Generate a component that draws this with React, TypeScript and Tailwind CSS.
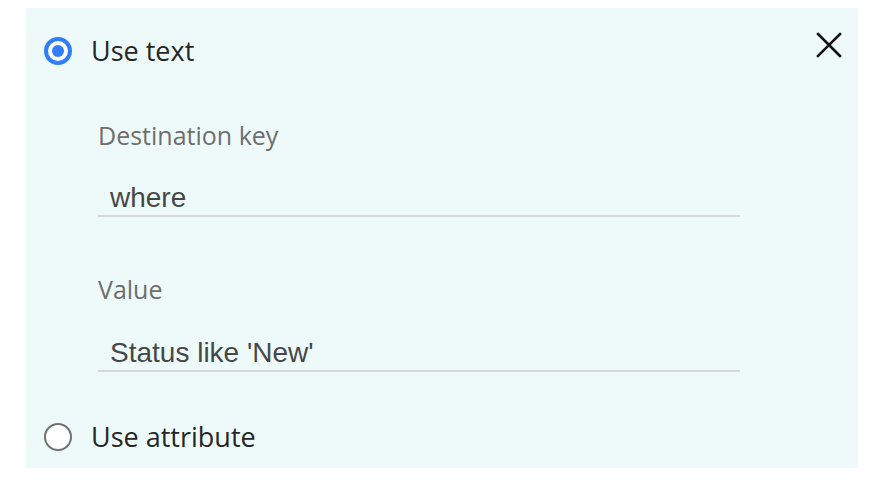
import { useState } from 'react';

type tField = {
    label: string;
    value: string;
}

const fields: tField[] = [
    { label: 'Destination key', value: 'where' },
    { label: 'Value', value: "Status like 'New'" },
];

const Radio = ({ checked }: { checked: boolean }) => {
    if (checked) {
        return <span className="flex items-center justify-center w-[28px] h-[28px] rounded-full border-[4px] border-[#2f7df7] bg-white shrink-0">
            <span className="w-[12px] h-[12px] rounded-full bg-[#2f7df7]" />
        </span>
    }
    return <span className="w-[28px] h-[28px] rounded-full border-[2.5px] border-[#717171] bg-white shrink-0" />
}

const App = () => {
    const [mode, setMode] = useState<'text' | 'attribute'>('text');

    return <div className="bg-white w-[880px] h-[484px] pt-[8px] pl-[26px]" style={{ fontFamily: '"Open Sans", "Noto Sans", sans-serif' }}>
        <div className="w-[832px] h-[460px] bg-[#eefafa] pl-[18px] pr-[16px] pt-[15px] flex flex-col">
            <div className="flex items-center h-[56px]">
                <button className="flex items-center gap-[19px]" onClick={() => setMode('text')}>
                    <Radio checked={mode === 'text'} />
                    <span className="text-[27px] text-[#262626]">Use text</span>
                </button>
                <button className="ml-auto mb-[12px]" aria-label="close">
                    <svg width="26" height="26" viewBox="0 0 26 26" fill="none" stroke="#111" strokeWidth="2.6" strokeLinecap="square">
                        <path d="M2 2 L24 24 M24 2 L2 24" />
                    </svg>
                </button>
            </div>
            <div className="ml-[54px] w-[642px] flex flex-col">
                {fields.map((f, i) => (
                    <div key={f.label} className={i === 0 ? 'mt-[41px]' : 'mt-[57px]'}>
                        <div className="h-[30px] leading-[30px] text-[25px] text-[#6e6e6e]">{f.label}</div>
                        <div className={`${i === 0 ? 'mt-[30px]' : 'mt-[31px]'} h-[37px] leading-[35px] border-b-2 border-[#d6d8d8] pl-[12px] text-[28px] text-[#474747]`} style={{ fontFamily: '"Liberation Sans", Arial, sans-serif' }}>
                            {f.value}
                        </div>
                    </div>
                ))}
            </div>
            <button className="mt-[45px] h-[40px] flex items-center gap-[19px] w-fit" onClick={() => setMode('attribute')}>
                <Radio checked={mode === 'attribute'} />
                <span className="text-[27px] text-[#262626]">Use attribute</span>
            </button>
        </div>
    </div>
}

export default App;
